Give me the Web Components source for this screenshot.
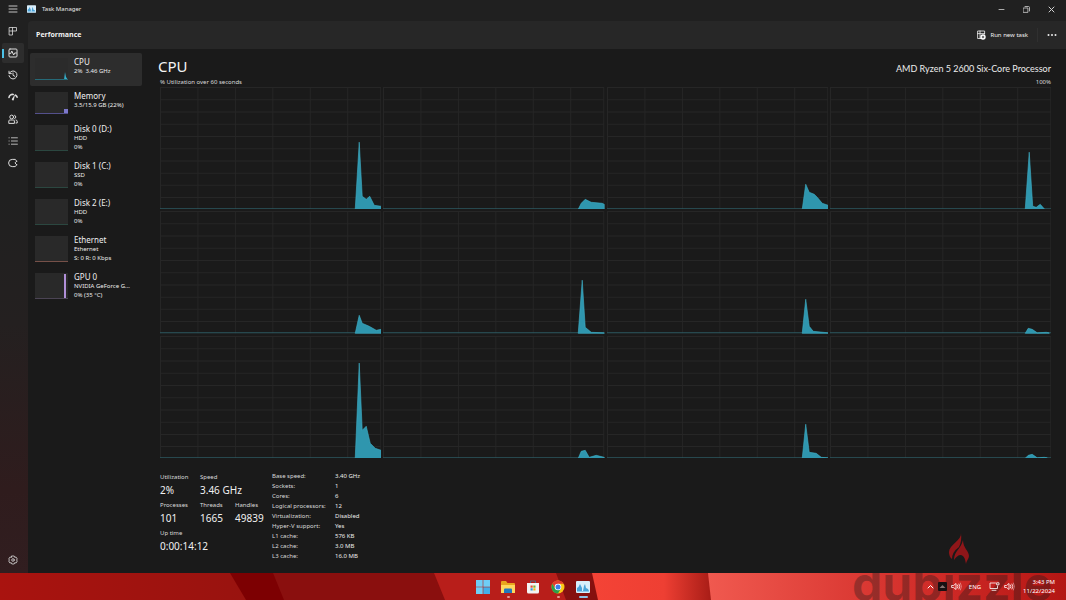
<!DOCTYPE html>
<html lang="en">
<head>
<meta charset="utf-8">
<title>Task Manager</title>
<style>
  html, body { height: 100%; }
  body { margin: 0; background: #1a1a1a; color: #ececec; font: 6px/10px "Noto Sans", "Open Sans", sans-serif; }
</style>
</head>
<body>
<tm-desktop></tm-desktop>
<script>
const base = `*{box-sizing:border-box} button{font:inherit;color:inherit;background:none;border:0;padding:0;margin:0} svg{display:block}`;
function define(name, css, html) {
  customElements.define(name, class extends HTMLElement {
    connectedCallback() {
      if (this.shadowRoot) return;
      const root = this.attachShadow({ mode: "open" });
      const t = document.createElement("template");
      t.innerHTML = `<style>${base}${css}</style>` + (typeof html === "function" ? html(this) : html);
      root.append(t.content.cloneNode(true));
    }
  });
}

const line = 'fill="none" stroke="currentColor" stroke-linecap="round" stroke-linejoin="round"';
const stroke = line + ' stroke-width="1"';
const thin = line + ' stroke-width=".8"';
const icons = {
  menu: `<path ${thin} d="M1 2h8M1 5h8M1 8h8"/>`,
  processes: `<path ${thin} d="M1.500 1.500h3v7.500h-3zM1.500 5h7V1.500h-4"/>`,
  performance: `<rect ${stroke} x="1" y="1" width="8" height="8" rx="1"/><path ${stroke} d="M1.500 5.400h1.300l1-2.400 1.900 4 .9-2h1.800"/>`,
  history: `<path ${stroke} d="M1 1.200v2.400h2.400M1.300 3.300A4 4 0 1 1 1 5.600M5 3v2.300l1.800 1"/>`,
  startup: `<path ${line} stroke-width="1.600" d="M1 5.400C1.400 3 3.600 2 5.200 2.500M7.600 3.200c1 .6 1.400 1.300 1.500 2"/><path fill="currentColor" d="M7.200 2 5.900 7.400a1 1 0 1 1-1.700-.8z"/>`,
  users: `<circle ${stroke} cx="3.700" cy="3" r="1.900"/><path ${stroke} d="M.8 9V7q0-1 1-1h3.600q1 0 1 1v2zM6.600 1.300a1.800 1.800 0 0 1 0 3.400M8 6q1.200.2 1.200 1.200V9H8"/>`,
  details: `<path ${thin} d="M3.400 1.800h6M3.400 5h6M3.400 8.200h6M1 1.800h.2M1 5h.2M1 8.200h.2"/>`,
  services: `<path ${stroke} d="M8.700 3.200 7.300 1.400H4.200a3.600 3.600 0 1 0 0 7.200h3.100l1.400-1.800M8.700 3.200 7 4.900l1.700 1.900"/>`,
  settings: `<path ${thin} d="M3.800 1h2.400l.5 1.300 1.400-.2L9.300 4l-.8 1 .8 1-1.200 2-1.400-.3L6.200 9H3.800l-.5-1.300-1.400.3L.7 6l.8-1-.8-1 1.200-1.900 1.400.2z"/><circle ${thin} cx="5" cy="5" r="1.300"/>`
};
const icon = n => `<svg viewBox="0 0 10 10" width="10" height="10" aria-hidden="true">${icons[n]}</svg>`;
const appIcon = (w, h) => `<svg viewBox="0 0 14 12" width="${w}" height="${h}" aria-hidden="true"><rect width="14" height="12" rx="1" fill="#d8eefb"/><path fill="#4aa3d9" d="M1 10V7l1.500-1L4 3l2 4v3zM7 10l1-5 1-2 1 4 2 1 1 2z"/><path fill="#8fc9ec" d="M1 10h12v1H1z"/></svg>`;

define("tm-rail-item", `
  :host{display:block;height:22px;padding:2px 4px 0 2px}
  button{display:flex;width:100%;height:20px;align-items:center;justify-content:center;border-radius:2px;color:#dcdcdc}
  :host([active]) button{background:linear-gradient(#4cc2e8,#4cc2e8) left/2px 9px no-repeat,#2d2d2d}
`, el => `<button aria-label="${el.getAttribute("label")}">${icon(el.getAttribute("icon"))}</button>`);

define("tm-rail", `
  :host{display:flex;flex-direction:column;width:28px;flex:none;padding:1px 0 3px;background:linear-gradient(#202020 0,#202020 32%,#242020 55%,#2f1c1d 85%,#311e20)}
  nav{display:flex;flex-direction:column;flex:1}
  .end{margin-top:auto}
`, `<nav aria-label="Pages">
  <tm-rail-item icon="processes" label="Processes"></tm-rail-item>
  <tm-rail-item icon="performance" label="Performance" active></tm-rail-item>
  <tm-rail-item icon="history" label="App history"></tm-rail-item>
  <tm-rail-item icon="startup" label="Startup apps"></tm-rail-item>
  <tm-rail-item icon="users" label="Users"></tm-rail-item>
  <tm-rail-item icon="details" label="Details"></tm-rail-item>
  <tm-rail-item icon="services" label="Services"></tm-rail-item>
  <tm-rail-item class="end" icon="settings" label="Settings"></tm-rail-item></nav>`);

define("tm-titlebar", `
  :host{display:flex;align-items:center;height:18px;flex:none;background:#202020;padding:0 2px 0 8px}
  .title{margin-left:6px}
  .app{margin-left:9px}
  .win{margin-left:auto;display:flex}
  .win button{width:25px;height:17px;display:grid;place-items:center;color:#d0d0d0}
`, `<button aria-label="Menu">${icon("menu")}</button><span class="app">${appIcon(9, 8)}</span><span class="title">Task Manager</span>
  <div class="win">
   <button aria-label="Minimize"><svg width="7" height="7"><path ${thin} d="M1 3.500h5"/></svg></button>
   <button aria-label="Restore"><svg width="7" height="7"><path ${thin} d="M.5 2h4.400v4.400H.5zM2 .5h3.500q1 0 1 1V5"/></svg></button>
   <button aria-label="Close"><svg width="7" height="7"><path ${stroke} d="m1 1 5 5M6 1 1 6"/></svg></button>
  </div>`);

define("tm-header", `
  :host{display:flex;align-items:center;height:28px;flex:none;background:#272727;border-top-left-radius:4px;padding:0 8px}
  h1{margin:0;font:700 7px/10px "Open Sans","Noto Sans",sans-serif;color:#f2f2f2}
  .run{margin-left:auto;display:flex;align-items:center;gap:4px;color:#f2f2f2}
  .more{border-left:1px solid #303030;margin-left:9px;padding:5px 1px 5px 9px}
`, `<h1>Performance</h1><button class="run"><svg width="9" height="10" viewBox="0 0 9 10" aria-hidden="true"><path ${thin} d="M4 8.500H.6V1h7v3M.6 3.600h7M3 1v7.500"/><circle cx="6" cy="7" r="2.700" fill="#fff"/><path stroke="#272727" stroke-width=".8" d="M4.800 7h2.400M6 5.800v2.400"/></svg>Run new task</button>
  <button class="more" aria-label="More options"><svg width="10" height="4"><g fill="currentColor"><circle cx="1.500" cy="2" r="1"/><circle cx="5" cy="2" r="1"/><circle cx="8.500" cy="2" r="1"/></g></svg></button>`);

define("tm-device", `
  :host{display:block;margin-bottom:1px}
  button{display:flex;width:100%;align-items:flex-start;gap:6px;padding:3px 5px 5px;text-align:left;border-radius:2px}
  button.short{padding:4px 5px 6px}
  :host([active]) button{background:#2d2d2d}
  svg{flex:none;background:#292929;margin-top:1px}
  :host([active]) svg{background:#2b2b2b}
  .name{display:block;font-size:8px;line-height:10px;color:#f0f0f0}
  .line{display:block;line-height:9px;white-space:nowrap}
`, el => {
  const lines = el.getAttribute("lines").split("|"), c = el.getAttribute("color"), two = lines.length > 1, h = two ? 26 : 22;
  const shape = { cpu: `<path fill="#35b0cc" d="M29 22l1-8 1 5 2 3z"/>`, mem: `<path fill="#7d78cc" d="M29 17h4v5h-4z"/>`, gpu: `<path fill="#b08fd8" d="M29 1h2v25h-2z"/>` }[el.getAttribute("shape")] || "";
  return `<button class="${two ? "" : "short"}"><svg width="33" height="${h}" aria-hidden="true">${shape}<path fill="${c}" d="M0 ${h - 1}h33v1H0z"/></svg><span><span class="name">${el.getAttribute("name")}</span>${lines.map(l => `<span class="line">${l}</span>`).join("")}</span></button>`;
});

define("tm-devices", `:host{display:block;width:114px;flex:none;padding:4px 0 0 2px}`, `
  <tm-device active name="CPU" lines="2%&nbsp; 3.46 GHz" shape="cpu" color="#266a78"></tm-device>
  <tm-device name="Memory" lines="3.5/15.9 GB (22%)" shape="mem" color="#54508c"></tm-device>
  <tm-device name="Disk 0 (D:)" lines="HDD|0%" color="#2b4740"></tm-device>
  <tm-device name="Disk 1 (C:)" lines="SSD|0%" color="#2b4740"></tm-device>
  <tm-device name="Disk 2 (E:)" lines="HDD|0%" color="#2b4740"></tm-device>
  <tm-device name="Ethernet" lines="Ethernet|S: 0 R: 0 Kbps" color="#765048"></tm-device>
  <tm-device name="GPU 0" lines="NVIDIA GeForce G...|0% (35 °C)" shape="gpu" color="#4b4454"></tm-device>`);

define("tm-graph", `
  :host{display:block;min-width:0;min-height:0;overflow:hidden}
  svg{width:100%;height:100%}
`, el => {
  let g = "";
  for (let i = 0; i < 10; i++) g += `M0 ${i * 12.2 + .5}H221`;
  for (let i = 0; i < 6; i++) g += `M${i * 37.4 + .5} 0V122`;
  g += "M220.5 0V122";
  return `<svg viewBox="0 0 221 122" preserveAspectRatio="none" aria-hidden="true"><path d="${g}" stroke="#262626" fill="none"/><path d="M0 121.500H221" stroke="#2c5960"/><path d="M${el.getAttribute("points")}V122H195z" fill="#2f96ae" stroke="#3fb0c8" stroke-width=".6"/></svg>`;
});

const curves = [
  "195 122L199 55 202 109 206 112 209.500 109 214 118 221 119",
  "195 122L198 116 202 112 208 115 219 116 221 117",
  "195 122L198.500 97 202 105 207 107 210 110 215 116 221 118",
  "195 122L199 65 202.500 119 206 120 210 117 214 121.500",
  "195 122L199 104 202 112 209 115 216 119 221 118",
  "195 122L199 69 202 116 208 121 221 121.500",
  "195 122L198.500 88 202 115 206 120 221 121.500",
  "195 122L198 117 202 118 207 121.500 216 121 219 121.500",
  "195 122L199 27 202 94 206 90 210 107 215 112 221 114",
  "195 122L198 115 202 114 206 121 213 119 221 121",
  "195 122L198.500 88 202 116 209 117 214 121 221 121.500",
  "195 122L198 119 202 118 207 121.500 214 121 217 121.500"
];

define("tm-graphs", `
  :host{display:grid;flex:1;min-height:0;grid-template-columns:repeat(4,minmax(0,1fr));grid-template-rows:repeat(3,minmax(0,1fr));gap:2px}
`, curves.map(c => `<tm-graph points="${c}"></tm-graph>`).join(""));

define("tm-stats", `
  :host{display:flex;flex:none;padding-top:13px;height:115px}
  .left{display:grid;grid-template-columns:40px 35px 37px;align-content:start;row-gap:1px}
  .wide{grid-column:span 2}
  dl{margin:0}
  dt{color:#dadada;line-height:12px;white-space:nowrap}
  dd{margin:0;font-size:10px;line-height:15px;white-space:nowrap;color:#f0f0f0}
  table{border-collapse:collapse;align-self:start;line-height:10px}
  td,th{padding:0;font-weight:400;text-align:left;white-space:nowrap;color:#dadada}
  th{width:63px}
  td{color:#ececec}
`, `<dl class="left">
   <div><dt>Utilization</dt><dd>2%</dd></div><div class="wide"><dt>Speed</dt><dd>3.46 GHz</dd></div>
   <div><dt>Processes</dt><dd>101</dd></div><div><dt>Threads</dt><dd>1665</dd></div><div><dt>Handles</dt><dd>49839</dd></div>
   <div class="wide"><dt>Up time</dt><dd>0:00:14:12</dd></div></dl>
  <table>${[["Base speed:", "3.40 GHz"], ["Sockets:", "1"], ["Cores:", "6"], ["Logical processors:", "12"], ["Virtualization:", "Disabled"], ["Hyper-V support:", "Yes"], ["L1 cache:", "576 KB"], ["L2 cache:", "3.0 MB"], ["L3 cache:", "16.0 MB"]].map(r => `<tr><th scope="row">${r[0]}</th><td>${r[1]}</td></tr>`).join("")}</table>`);

define("tm-detail", `
  :host{display:flex;flex-direction:column;flex:1;min-width:0;padding:6px 15px 0 18px}
  .head,.axis{display:flex;justify-content:space-between;align-items:baseline}
  h2{margin:0 0 0 -2px;font-size:15px;line-height:22px;font-weight:400;color:#f4f4f4}
  .model{font:9px/10px Lato,"Noto Sans",sans-serif}
  .axis{line-height:10px;color:#dadada}
`, `<div class="head"><h2>CPU</h2><span class="model">AMD Ryzen 5 2600 Six-Core Processor</span></div>
  <div class="axis"><span>% Utilization over 60 seconds</span><span>100%</span></div>
  <tm-graphs></tm-graphs><tm-stats></tm-stats>`);

define("tm-taskbar", `
  :host{display:flex;flex:none;height:27px;position:relative;color:#fff}
  .wall{position:absolute;inset:0;width:100%;height:100%}
  .bar{position:relative;display:grid;grid-template-columns:1fr auto 1fr;align-items:center;flex:1}
  .apps{grid-column:2;display:flex;gap:11px}
  .apps button{width:14px;height:27px;display:flex;flex-direction:column;align-items:center;padding-top:7px;gap:2px}
  .apps i{width:3px;height:2px;border-radius:1px}
  .apps .on i{background:#e79a94}
  .apps .now i{width:9px;background:#8fc1e8}
  .tray{display:flex;justify-content:flex-end;align-items:center;gap:4px;padding-right:11px}
  .tray button{display:block}
  .lang{margin:0 4px 0 3px}
  .clock{text-align:right;line-height:9px;margin-left:4px}
`, `<svg class="wall" viewBox="0 0 1066 27" preserveAspectRatio="none" aria-hidden="true">
   <defs><linearGradient id="a"><stop stop-color="#a9130f"/><stop offset="1" stop-color="#98130f"/></linearGradient>
   <linearGradient id="c"><stop stop-color="#f44336"/><stop offset=".6" stop-color="#ee3f33"/><stop offset="1" stop-color="#a71c16"/></linearGradient>
   <linearGradient id="d"><stop stop-color="#f0594f"/><stop offset=".4" stop-color="#dc3b35"/><stop offset=".7" stop-color="#cc2724"/><stop offset="1" stop-color="#b31613"/></linearGradient></defs>
   <path fill="url(#a)" d="M0 0h260v27H0z"/><path fill="#7d0002" d="M230 0h60v27h-44z"/><path fill="#8a0f0e" d="M273 0h180v27H284z"/>
   <path fill="#b81e1a" d="M434 0h140v27H445z"/><path fill="#85100f" d="M556 0h60v27h-50z"/><path fill="url(#c)" d="M592 0h120v27H598z"/><path fill="url(#d)" d="M708 0h358v27H711z"/></svg>
  <slot></slot>
  <div class="bar">
   <div class="apps">
    <button aria-label="Start"><svg width="14" height="14"><path fill="#6fcdf5" d="M0 0h6.700v6.700H0zM7.300 0H14v6.700H7.300zM0 7.300h6.700V14H0z"/><path fill="#43aee9" d="M7.300 7.300H14V14H7.300z"/></svg></button>
    <button class="on" aria-label="File Explorer"><svg width="14" height="14"><path fill="#e9a51d" d="M0 2q0-1 1-1h4l1.500 2H13q1 0 1 1v4H0z"/><path fill="#ffd65c" d="M0 5h14v8H0z"/><path fill="#2377bd" d="M3 9.500q0-1 1-1h6q1 0 1 1V13H3z"/></svg><i></i></button>
    <button aria-label="Microsoft Store"><svg width="14" height="14"><path fill="none" stroke="#506a80" d="M4.500 4V1h5v3"/><path fill="#f3f3f3" d="M1 3h12v9q0 1.500-1.500 1.500h-9Q1 13.500 1 12z"/><path fill="#e25037" d="M4.500 5.500h2.200v2.200H4.500z"/><path fill="#78b52b" d="M7.300 5.500h2.200v2.200H7.300z"/><path fill="#2d9bdd" d="M4.500 8.300h2.200v2.200H4.500z"/><path fill="#f0b71c" d="M7.300 8.300h2.200v2.200H7.300z"/></svg></button>
    <button class="on" aria-label="Google Chrome"><svg width="14" height="14" viewBox="-7 -7 14 14"><circle r="6.500" fill="#fbc914"/><path fill="#e33b2e" d="M-5.600-3.300A6.500 6.500 0 0 1 5.600-3.300H0L-2.900 1.600z"/><path fill="#2d9f4b" d="M-5.600-3.300A6.500 6.500 0 0 0 0 6.500L2.900 1.600-2.900 1.600z"/><circle r="3.300" fill="#fff"/><circle r="2.500" fill="#3e7de8"/></svg><i></i></button>
    <button class="on now" aria-label="Task Manager">${appIcon(14, 14)}<i></i></button>
   </div>
   <div class="tray">
    <button aria-label="Show hidden icons"><svg width="7" height="6"><path ${stroke} d="M1 4l2.500-2.500L6 4"/></svg></button>
    <svg width="9" height="9" aria-hidden="true"><rect width="9" height="9" rx="1" fill="#171012"/><path fill="#85706f" d="M1.500 6 4.500 3l3 3z"/></svg>
    <svg width="11" height="9" aria-hidden="true"><path ${thin} d="M1 3.500h1.500L5 1.500v6L2.500 5.500H1zM6.500 3q1 1.500 0 3M8 2q1.700 2.500 0 5"/><path ${thin} opacity=".5" d="M9.500 1q2 3.500 0 7"/></svg>
    <span class="lang">ENG</span>
    <svg width="11" height="9" aria-hidden="true"><path ${thin} d="M6.500 1H1v5.500h7.500V4M3 8.300h4M8 .8h2v2H8z"/></svg>
    <svg width="11" height="9" aria-hidden="true"><path ${thin} d="M1 3.500h1.500L5 1.500v6L2.500 5.500H1zM6.500 3q1 1.500 0 3M8 2q1.700 2.500 0 5"/><path ${thin} opacity=".5" d="M9.500 1q2 3.500 0 7"/></svg>
    <div class="clock">3:43 PM<br>11/22/2024</div>
   </div>
  </div>`);

define("tm-watermark", `
  :host{position:absolute;right:0;bottom:0;width:214px;height:70px;pointer-events:none}
  .word{position:absolute;left:0;bottom:-8px;font:700 48px/48px Inter,"Open Sans",sans-serif;color:rgba(26,26,26,.35)}
  svg{position:absolute;left:96px;top:3px}
`, `<span class="word">dubizzle</span><svg width="22" height="34" viewBox="0 0 22 34" aria-hidden="true"><path fill="#8f1619" d="M13 0C14 7 1 12 1 19q0 5 3 7 0-7 7-12 3-6 2-14z"/><path fill="#8f1619" d="M15 7c-2 9-9 11-9 20 2-3 4-5 7-5 3 1 4 3 5 9 0-3 3-5 3-8 0-5-6-8-6-16z"/></svg>`);

define("tm-desktop", `
  :host{display:flex;flex-direction:column;min-height:100vh;position:relative;overflow:hidden}
  .window{display:flex;flex-direction:column;flex:1}
  .body{display:flex;flex:1;background:#202020}
  .page{display:flex;flex-direction:column;flex:1;min-width:0;padding-top:3px}
  .content{display:flex;flex:1;background:#1a1a1a}
`, `<div class="window"><tm-titlebar></tm-titlebar><div class="body"><tm-rail></tm-rail><main class="page"><tm-header></tm-header><div class="content"><tm-devices></tm-devices><tm-detail></tm-detail></div></main></div></div><tm-taskbar><tm-watermark></tm-watermark></tm-taskbar>`);
</script>
</body>
</html>
